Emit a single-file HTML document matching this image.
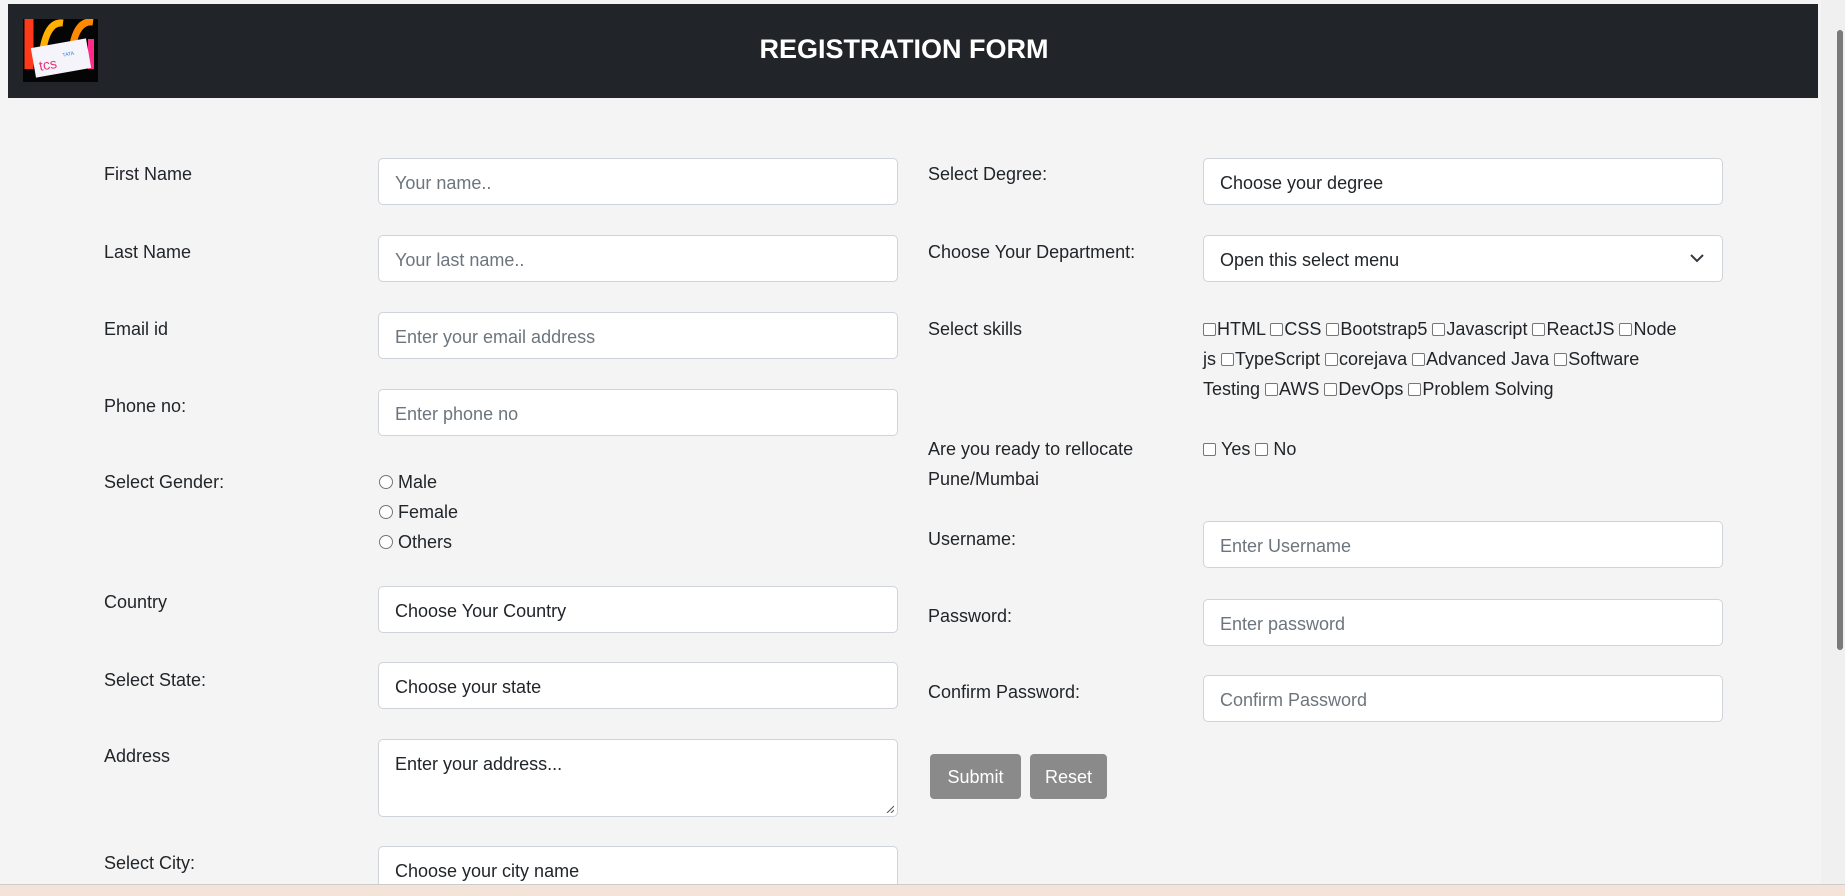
<!DOCTYPE html>
<html><head><meta charset="utf-8"><style>
*{box-sizing:border-box;margin:0;padding:0}
body{width:1845px;height:896px;overflow:hidden;background:#f4f4f4;font-family:"Liberation Sans",sans-serif;color:#212529;position:relative;font-size:18px}
.hdr{position:absolute;left:8px;top:4px;width:1810px;height:94px;background:#212529}
.title{position:absolute;left:0;width:1792px;top:30px;text-align:center;color:#fff;font-weight:bold;font-size:27px}
.logo{position:absolute;left:23px;top:19px;width:75px;height:63px;background:#000;overflow:hidden}
.lbl{position:absolute;font-size:18px;line-height:30px;margin-top:1px}
.inp{position:absolute;height:47px;width:520px;background:#fff;border:1px solid #ced4da;border-radius:5px;padding-left:16px;line-height:49px;font-size:18px;color:#212529}
.ph{color:#6c757d}
.radio{position:absolute;left:379px;font-size:18px;line-height:30px;margin-top:1px}
.radio span,.cb{display:inline-block;width:14px;height:14px;border:1px solid #767676;background:#fff;vertical-align:-1px;margin-right:5px}
.radio span{border-radius:50%}
.cb{width:13px;height:13px;border-radius:2px;margin-right:1px}
.btn{position:absolute;top:754px;height:45px;background:#8a8a8a;color:#fff;border-radius:4px;text-align:center;line-height:47px;font-size:18px}
</style></head><body>
<div class="hdr"><div class="title">REGISTRATION FORM</div></div>
<div class="logo">
<svg width="75" height="63" viewBox="0 0 75 63">
<rect width="75" height="63" fill="#050505"/>
<path d="M6 0 v50" stroke="#ff3a1a" stroke-width="9"/>
<path d="M20 30 q5-28 20-26" stroke="#ffb000" stroke-width="7" fill="none"/>
<path d="M50 25 q5-24 20-22" stroke="#ff8a00" stroke-width="7" fill="none"/>
<path d="M68 20 v30" stroke="#ff2a8a" stroke-width="6"/>
<rect x="10" y="24" width="56" height="30" fill="#f4f4fa" transform="rotate(-10 38 39)"/>
<text x="15" y="48" font-size="14" fill="#e8337b" font-family="Liberation Sans" transform="rotate(-10 38 39)">tcs</text>
<text x="40" y="38" font-size="5" fill="#2a7fd8" font-family="Liberation Sans" transform="rotate(-10 38 39)">TATA</text>
</svg>
</div>

<div class="lbl" style="left:104px;top:158px">First Name</div>
<div class="inp ph" style="left:378px;top:158px">Your name..</div>
<div class="lbl" style="left:104px;top:236px">Last Name</div>
<div class="inp ph" style="left:378px;top:235px">Your last name..</div>
<div class="lbl" style="left:104px;top:313px">Email id</div>
<div class="inp ph" style="left:378px;top:312px">Enter your email address</div>
<div class="lbl" style="left:104px;top:390px">Phone no:</div>
<div class="inp ph" style="left:378px;top:389px">Enter phone no</div>
<div class="lbl" style="left:104px;top:466px">Select Gender:</div>
<div class="radio" style="top:466px"><span></span>Male</div>
<div class="radio" style="top:496px"><span></span>Female</div>
<div class="radio" style="top:526px"><span></span>Others</div>
<div class="lbl" style="left:104px;top:586px">Country</div>
<div class="inp" style="left:378px;top:586px">Choose Your Country</div>
<div class="lbl" style="left:104px;top:664px">Select State:</div>
<div class="inp" style="left:378px;top:662px">Choose your state</div>
<div class="lbl" style="left:104px;top:740px">Address</div>
<div class="inp" style="left:378px;top:739px;height:78px;line-height:48px">Enter your address...
<svg style="position:absolute;right:3px;bottom:3px" width="8" height="8"><path d="M1 8L8 1M5 8L8 5" stroke="#555"/></svg></div>
<div class="lbl" style="left:104px;top:847px">Select City:</div>
<div class="inp" style="left:378px;top:846px">Choose your city name</div>

<div class="lbl" style="left:928px;top:158px">Select Degree:</div>
<div class="inp" style="left:1203px;top:158px">Choose your degree</div>
<div class="lbl" style="left:928px;top:236px">Choose Your Department:</div>
<div class="inp" style="left:1203px;top:235px">Open this select menu
<svg style="position:absolute;right:18px;top:18px" width="14" height="9"><path d="M1 1l6 6 6-6" stroke="#343a40" stroke-width="2" fill="none"/></svg></div>
<div class="lbl" style="left:928px;top:313px">Select skills</div>
<div class="lbl" style="left:1203px;top:313px;width:520px"><span class="cb"></span>HTML <span class="cb"></span>CSS <span class="cb"></span>Bootstrap5 <span class="cb"></span>Javascript <span class="cb"></span>ReactJS <span class="cb"></span>Node<br>js <span class="cb"></span>TypeScript <span class="cb"></span>corejava <span class="cb"></span>Advanced Java <span class="cb"></span>Software<br>Testing <span class="cb"></span>AWS <span class="cb"></span>DevOps <span class="cb"></span>Problem Solving</div>
<div class="lbl" style="left:928px;top:433px">Are you ready to rellocate<br>Pune/Mumbai</div>
<div class="lbl" style="left:1203px;top:433px"><span class="cb" style="margin-right:5px"></span>Yes <span class="cb" style="margin-right:5px"></span>No</div>
<div class="lbl" style="left:928px;top:523px">Username:</div>
<div class="inp ph" style="left:1203px;top:521px">Enter Username</div>
<div class="lbl" style="left:928px;top:600px">Password:</div>
<div class="inp ph" style="left:1203px;top:599px">Enter password</div>
<div class="lbl" style="left:928px;top:676px">Confirm Password:</div>
<div class="inp ph" style="left:1203px;top:675px">Confirm Password</div>
<div class="btn" style="left:930px;width:91px">Submit</div>
<div class="btn" style="left:1030px;width:77px">Reset</div>

<div style="position:absolute;left:1821px;top:0;width:24px;height:885px;background:#f0f0f0"></div>
<div style="position:absolute;left:1837px;top:30px;width:6px;height:620px;background:#7a7a7a;border-radius:3px"></div>
<div style="position:absolute;left:0;top:884px;width:1845px;height:12px;background:#f3e3d8;border-top:1px solid #ccc"></div>
</body></html>
